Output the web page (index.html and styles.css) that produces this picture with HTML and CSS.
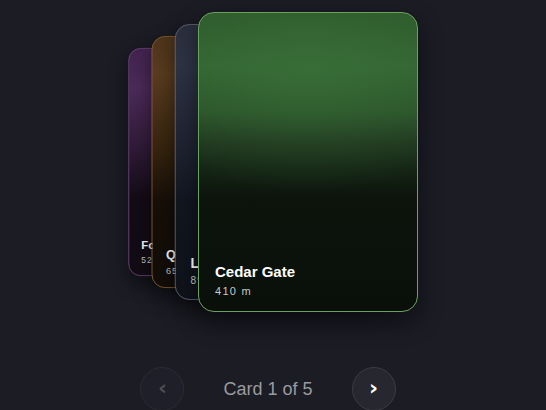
FILE: index.html
```html
<!DOCTYPE html>
<html>
<head>
<meta charset="utf-8">
<link rel="stylesheet" href="styles.css">
</head>
<body>
<main class="app">
  <section class="stack">
    <article class="card card-5 hidden"><div class="info"><h3>Pine Hollow</h3><p>720 m</p></div></article>
    <article class="card card-4"><div class="info"><h3>Fox Ridge</h3><p>525 m</p></div></article>
    <article class="card card-3"><div class="info"><h3>Quarry Peak</h3><p>650 m</p></div></article>
    <article class="card card-2"><div class="info"><h3>Lantern Hill</h3><p>890 m</p></div></article>
    <article class="card card-1"><div class="info"><h3>Cedar Gate</h3><p>410 m</p></div></article>
  </section>
  <nav class="nav">
    <button class="btn btn-prev" disabled>&#8249;</button>
    <span class="label">Card 1 of 5</span>
    <button class="btn btn-next">&#8250;</button>
  </nav>
</main>
</body>
</html>
```
FILE: styles.css
```css
* { box-sizing: border-box; }
html, body { margin: 0; padding: 0; }
body {
  width: 546px;
  height: 410px;
  overflow: hidden;
  background: #1b1c24;
  font-family: "Liberation Sans", Arial, sans-serif;
  color: #fff;
}
.app {
  display: flex;
  flex-direction: column;
  align-items: center;
  padding-top: 12px;
}
.stack {
  display: grid;
  width: 220px;
  height: 300px;
  transform: translateX(35px);
}
.card {
  grid-area: 1 / 1;
  position: relative;
  width: 220px;
  height: 300px;
  border-radius: 16px;
  border: 1px solid;
  display: flex;
  flex-direction: column;
  justify-content: flex-end;
  padding: 0 16px 13px;
  box-shadow: 0 10px 24px rgba(0,0,0,0.45);
  overflow: hidden;
}
.hidden { opacity: 0; }
.card-1 {
  z-index: 5;
  transform: translateX(0);
  border-color: #69a25f;
  background:
    radial-gradient(ellipse 90% 40% at 50% 20%, rgba(64,122,60,0.45), rgba(64,122,60,0) 100%),
    linear-gradient(180deg, #2d582c 0%, #326332 18%, #2a522a 33%, #1f361f 43%, #152515 52%, #0c140c 62%, #0a0f0a 100%);
}
.card-2 {
  z-index: 4;
  border-color: #5c6372;
  transform: translateX(-32px) scale(0.92);
  background: linear-gradient(180deg, #2a2f3d 0%, #2e3445 15%, #1e2331 45%, #121620 65%, #0f121a 100%);
}
.card-3 {
  z-index: 3;
  border-color: #8c6232;
  transform: translateX(-64px) scale(0.84);
  background: linear-gradient(180deg, #4e351b 0%, #5a3d1f 15%, #36240f 45%, #170f08 66%, #120d08 100%);
}
.card-4 {
  z-index: 2;
  border-color: #7a4a86;
  transform: translateX(-96px) scale(0.76);
  background: linear-gradient(180deg, #432450 0%, #4c2a5a 18%, #2e1a36 45%, #130b16 66%, #120c15 100%);
}
.card-5 {
  z-index: 1;
  border-color: #555;
  transform: translateX(-128px) scale(0.68);
  background: #222;
}
.info h3 {
  margin: 0;
  font-size: 15px;
  font-weight: 700;
  line-height: 20px;
  color: #fff;
}
.info p {
  margin: 2px 0 0;
  font-size: 11px;
  line-height: 14px;
  letter-spacing: 1.3px;
  color: rgba(255,255,255,0.78);
}
.nav {
  display: flex;
  align-items: center;
  gap: 39px;
  margin-top: 55px;
  transform: translateX(-5px);
}
.btn {
  width: 44px;
  height: 44px;
  border-radius: 50%;
  border: 1px solid #3a3b45;
  background: #26272f;
  color: #fff;
  font-family: "DejaVu Sans", sans-serif;
  font-size: 22px;
  font-weight: 700;
  line-height: 1;
  display: flex;
  align-items: center;
  justify-content: center;
  padding: 0 0 3px;
}
.btn-prev {
  background: #1e1f28;
  border-color: #2a2b34;
  color: #4c4d56;
}
.label {
  font-size: 18px;
  color: #9a9a9f;
  text-align: center;
}
```
